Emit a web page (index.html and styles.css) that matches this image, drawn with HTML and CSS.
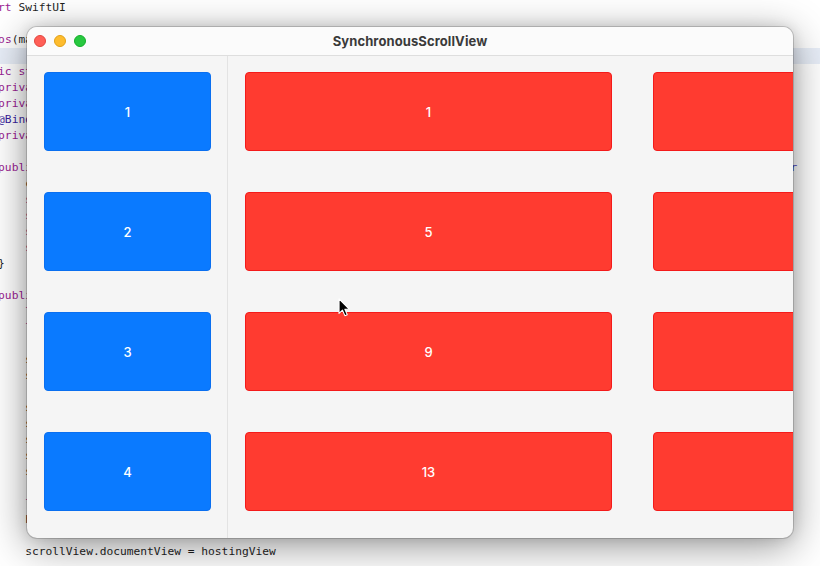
FILE: index.html
```html
<!DOCTYPE html>
<html>
<head>
<meta charset="utf-8">
<link rel="stylesheet" href="styles.css">
</head>
<body>
<div class="editor">
  <div class="code">
    <div class="ln"><span class="kw">import</span> SwiftUI</div>
    <div class="ln"></div>
    <div class="ln"><span class="kw">#if</span> <span class="kw">os</span>(macOS)</div>
    <div class="ln hl"></div>
    <div class="ln"><span class="kw">public struct</span> SynchronousScrollView&lt;Content: View&gt;: NSViewRepresentable {</div>
    <div class="ln">    <span class="kw">private let</span> axes: Axis.Set</div>
    <div class="ln">    <span class="kw">private let</span> showsIndicators: Bool</div>
    <div class="ln">    <span class="attr">@Binding</span> <span class="kw">var</span> contentOffset: CGPoint</div>
    <div class="ln">    <span class="kw">private let</span> content: Content</div>
    <div class="ln"></div>
    <div class="ln">    <span class="kw">public init</span>(_ axes: Axis.Set = .vertical, showsIndicators: Bool = <span class="kw">false</span>, contentOffset: Binding&lt;CGPoint&gt;, <span class="attr2">@ViewBuilder</span></div>
    <div class="ln">        contentOffset = contentOffset</div>
    <div class="ln">        <span class="kw">self</span>.axes = axes</div>
    <div class="ln">        <span class="kw">self</span>.showsIndicators = showsIndicators</div>
    <div class="ln">        <span class="kw">self</span>._contentOffset = contentOffset</div>
    <div class="ln">        <span class="kw">self</span>.content = content()</div>
    <div class="ln">    }</div>
    <div class="ln"></div>
    <div class="ln">    <span class="kw">public func</span> makeNSView(context: Context) -&gt; NSScrollView {</div>
    <div class="ln">        <span class="kw">let</span> scrollView = NSScrollView()</div>
    <div class="ln">        <span class="kw">let</span> clipView = NSClipView()</div>
    <div class="ln"></div>
    <div class="ln">        scrollView.hasVerticalScroller = axes.contains(.vertical)</div>
    <div class="ln">        scrollView.hasHorizontalScroller = axes.contains(.horizontal)</div>
    <div class="ln"></div>
    <div class="ln">        scrollView.contentView = clipView</div>
    <div class="ln">        scrollView.drawsBackground = false</div>
    <div class="ln">        scrollView.autohidesScrollers = true</div>
    <div class="ln">        scrollView.scrollerStyle = .overlay</div>
    <div class="ln">        scrollView.verticalScrollElasticity = .none</div>
    <div class="ln"></div>
    <div class="ln">        <span class="kw">let</span> hostingView = NSHostingView(rootView: content)</div>
    <div class="ln">        hostingView.translatesAutoresizingMaskIntoConstraints = false</div>
    <div class="ln"></div>
    <div class="ln">        scrollView.documentView = hostingView</div>
  </div>
</div>

<div class="window">
  <div class="titlebar">
    <div class="lights">
      <span class="light red"></span>
      <span class="light yellow"></span>
      <span class="light green"></span>
    </div>
    <div class="title">SynchronousScrollView</div>
  </div>
  <div class="body">
    <div class="left">
      <div class="box blue">1</div>
      <div class="box blue">2</div>
      <div class="box blue">3</div>
      <div class="box blue">4</div>
    </div>
    <div class="right">
      <div class="row"><div class="box red">1</div><div class="box red">2</div></div>
      <div class="row"><div class="box red">5</div><div class="box red">6</div></div>
      <div class="row"><div class="box red">9</div><div class="box red">10</div></div>
      <div class="row"><div class="box red">13</div><div class="box red">14</div></div>
    </div>
  </div>
</div>

<svg class="cursor" width="13" height="20" viewBox="0 0 14 22">
  <path d="M1 1 L1 17 L4.8 13.4 L7.4 19.4 L10 18.3 L7.4 12.4 L12.4 12.4 Z" fill="#000" stroke="#fff" stroke-width="1.2" stroke-linejoin="round"/>
</svg>
</body>
</html>
```

FILE: styles.css
```css
html, body {
  margin: 0;
  padding: 0;
  background: #ffffff;
  width: 820px;
  height: 566px;
  overflow: hidden;
}

body {
  position: relative;
  font-family: "Inter", "Noto Sans", sans-serif;
}

.editor {
  width: 820px;
  height: 566px;
  overflow: hidden;
}

.code {
  margin-left: -29px;
  font-family: "DejaVu Sans Mono", "Liberation Mono", monospace;
  font-size: 11.26px;
  color: #1f1f1f;
}

.ln {
  height: 16px;
  line-height: 16px;
  white-space: pre;
}

.ln.hl {
  background: #e8eef8;
  margin-left: 29px;
  width: 820px;
}

.kw {
  color: #9b2393;
}

.attr {
  color: #3b1fa0;
}

.attr2 {
  color: #4a3bbf;
}

.window {
  position: absolute;
  left: 27px;
  top: 27px;
  width: 766px;
  height: 511px;
  border-radius: 10px;
  background: #f5f5f5;
  overflow: hidden;
  display: flex;
  flex-direction: column;
  box-shadow: 0 0 0 1px rgba(0, 0, 0, 0.16), 0 8px 40px rgba(0, 0, 0, 0.42), 0 0 14px rgba(0, 0, 0, 0.12);
}

.titlebar {
  height: 28px;
  flex: none;
  background: #fbfbfb;
  border-bottom: 1px solid #dedede;
  position: relative;
  display: flex;
  align-items: center;
  justify-content: center;
}

.lights {
  position: absolute;
  left: 7px;
  top: 8px;
  display: flex;
  gap: 8px;
}

.light {
  width: 12px;
  height: 12px;
  border-radius: 50%;
  box-sizing: border-box;
}

.light.red { background: #ff5f57; border: 0.5px solid #e2463f; }
.light.yellow { background: #febc2e; border: 0.5px solid #e1a116; }
.light.green { background: #28c840; border: 0.5px solid #14ae2a; }

.title {
  font-size: 13px;
  font-weight: 700;
  color: #3a3a3a;
  letter-spacing: 0.1px;
}

.body {
  flex: 1;
  display: flex;
  min-height: 0;
}

.left {
  width: 201px;
  flex: none;
  box-sizing: border-box;
  border-right: 1px solid #e3e3e3;
  padding: 16px 0 0 17px;
  display: flex;
  flex-direction: column;
  gap: 41px;
}

.right {
  flex: 1;
  overflow: hidden;
  padding: 16px 0 0 17px;
  display: flex;
  flex-direction: column;
  gap: 41px;
}

.row {
  display: flex;
  gap: 41px;
}

.box {
  height: 79px;
  border-radius: 4px;
  box-sizing: border-box;
  display: flex;
  align-items: center;
  justify-content: center;
  color: #ffffff;
  font-size: 13px;
  font-weight: 500;
  flex: none;
}

.box.blue {
  width: 167px;
  background: #0a7aff;
  border: 1px solid #0a6ff0;
}

.box.red {
  width: 367px;
  background: #ff3b30;
  border: 1px solid #f41a1a;
}

.cursor {
  position: absolute;
  left: 338px;
  top: 298px;
}
```
